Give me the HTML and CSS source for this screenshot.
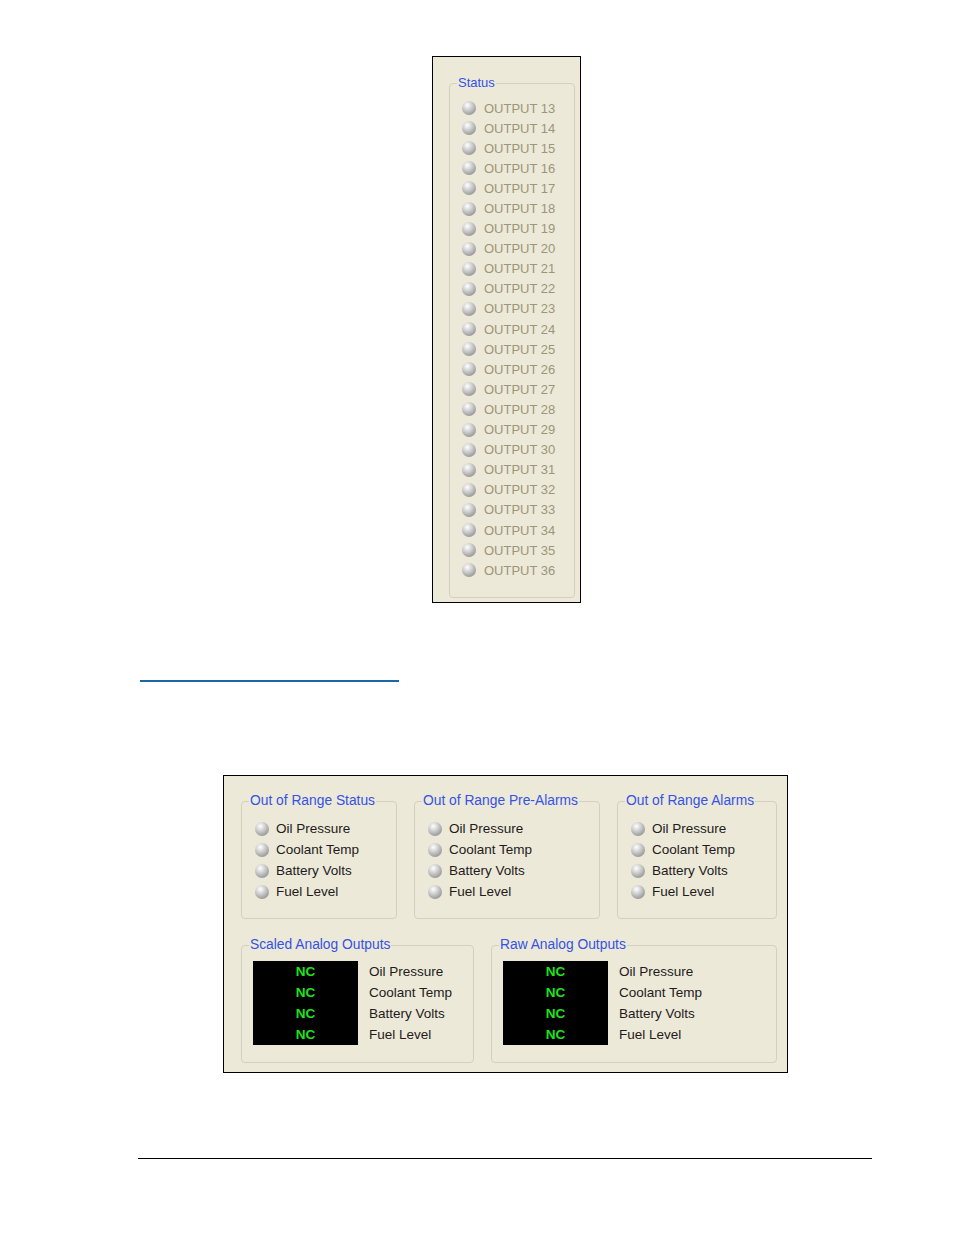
FILE: index.html
```html
<!DOCTYPE html>
<html lang="en">
<head>
  <meta charset="UTF-8" />
  <meta name="viewport" content="width=device-width, initial-scale=1.0"/>
  <title>Status and Analog Outputs</title>
  <link rel="stylesheet" href="styles.css">
</head>
<body>

  <div class="window status-window">
    <fieldset class="group status-group">
      <legend>Status</legend>
      <ul class="leds dim">
        <li><span class="led"></span>OUTPUT 13</li>
        <li><span class="led"></span>OUTPUT 14</li>
        <li><span class="led"></span>OUTPUT 15</li>
        <li><span class="led"></span>OUTPUT 16</li>
        <li><span class="led"></span>OUTPUT 17</li>
        <li><span class="led"></span>OUTPUT 18</li>
        <li><span class="led"></span>OUTPUT 19</li>
        <li><span class="led"></span>OUTPUT 20</li>
        <li><span class="led"></span>OUTPUT 21</li>
        <li><span class="led"></span>OUTPUT 22</li>
        <li><span class="led"></span>OUTPUT 23</li>
        <li><span class="led"></span>OUTPUT 24</li>
        <li><span class="led"></span>OUTPUT 25</li>
        <li><span class="led"></span>OUTPUT 26</li>
        <li><span class="led"></span>OUTPUT 27</li>
        <li><span class="led"></span>OUTPUT 28</li>
        <li><span class="led"></span>OUTPUT 29</li>
        <li><span class="led"></span>OUTPUT 30</li>
        <li><span class="led"></span>OUTPUT 31</li>
        <li><span class="led"></span>OUTPUT 32</li>
        <li><span class="led"></span>OUTPUT 33</li>
        <li><span class="led"></span>OUTPUT 34</li>
        <li><span class="led"></span>OUTPUT 35</li>
        <li><span class="led"></span>OUTPUT 36</li>
      </ul>
    </fieldset>
  </div>

  <hr class="section-rule">

  <div class="window range-window">
    <div class="group-row">
      <fieldset class="group range-status">
        <legend>Out of Range Status</legend>
        <ul class="leds">
          <li><span class="led"></span>Oil Pressure</li>
          <li><span class="led"></span>Coolant Temp</li>
          <li><span class="led"></span>Battery Volts</li>
          <li><span class="led"></span>Fuel Level</li>
        </ul>
      </fieldset>
      <fieldset class="group range-prealarms">
        <legend>Out of Range Pre-Alarms</legend>
        <ul class="leds">
          <li><span class="led"></span>Oil Pressure</li>
          <li><span class="led"></span>Coolant Temp</li>
          <li><span class="led"></span>Battery Volts</li>
          <li><span class="led"></span>Fuel Level</li>
        </ul>
      </fieldset>
      <fieldset class="group range-alarms">
        <legend>Out of Range Alarms</legend>
        <ul class="leds">
          <li><span class="led"></span>Oil Pressure</li>
          <li><span class="led"></span>Coolant Temp</li>
          <li><span class="led"></span>Battery Volts</li>
          <li><span class="led"></span>Fuel Level</li>
        </ul>
      </fieldset>
    </div>

    <div class="group-row">
      <fieldset class="group scaled-outputs">
        <legend>Scaled Analog Outputs</legend>
        <div class="analog">
          <ul class="readout">
            <li>NC</li>
            <li>NC</li>
            <li>NC</li>
            <li>NC</li>
          </ul>
          <ul class="labels">
            <li>Oil Pressure</li>
            <li>Coolant Temp</li>
            <li>Battery Volts</li>
            <li>Fuel Level</li>
          </ul>
        </div>
      </fieldset>
      <fieldset class="group raw-outputs">
        <legend>Raw Analog Outputs</legend>
        <div class="analog">
          <ul class="readout">
            <li>NC</li>
            <li>NC</li>
            <li>NC</li>
            <li>NC</li>
          </ul>
          <ul class="labels">
            <li>Oil Pressure</li>
            <li>Coolant Temp</li>
            <li>Battery Volts</li>
            <li>Fuel Level</li>
          </ul>
        </div>
      </fieldset>
    </div>
  </div>

  <hr class="page-rule">

</body>
</html>
```

FILE: styles.css
```css
body {
  margin: 0;
  padding-top: 56px;
  background-color: #fff;
  font-family: "Liberation Sans", Arial, sans-serif;
  font-size: 13px;
}

ul {
  list-style-type: none;
  margin: 0;
  padding: 0;
}

.window {
  box-sizing: border-box;
  background-color: #ece9d8;
  border: 1px solid #000;
}

/* group boxes */
.group {
  box-sizing: border-box;
  margin: 0;
  border: 1px solid #d3d0c0;
  border-radius: 4px;
}

.group legend {
  padding: 0 1px;
  margin-left: 7px;
  color: #3552e6;
  font-size: 13.8px;
  line-height: 16px;
}

/* round indicator lamps */
.leds li {
  display: flex;
  align-items: center;
}

.led {
  flex: none;
  width: 14px;
  height: 14px;
  border-radius: 50%;
  background: radial-gradient(circle at 38% 30%, #ffffff 0%, #dedede 25%, #a8a8a8 65%, #8f8f8f 85%, #b4b4b4 100%);
}

/* status window */
.status-window {
  width: 149px;
  height: 547px;
  margin-left: 432px;
  padding: 18px 5px 5px 16px;
}

.status-group {
  height: 523px;
  padding: 7px 0 0 0;
}

.status-group legend {
  font-size: 13px;
}

.status-group .leds {
  margin-left: 12px;
}

.dim li {
  height: 20.1px;
  color: #9d9579;
}

.dim .led {
  margin-right: 8px;
}

.section-rule {
  width: 259px;
  margin: 77px 0 0 140px;
  border: 0;
  border-top: 2px solid #1c68a6;
}

/* out of range window */
.range-window {
  width: 565px;
  height: 298px;
  margin: 93px 0 0 223px;
  padding: 17px 9px 0 17px;
  display: flex;
  flex-direction: column;
  gap: 18px;
}

.group-row {
  display: flex;
  gap: 17px;
}

.group-row .group {
  height: 126px;
  padding: 0;
}

.group-row:first-child .group {
  padding-top: 9px;
}

.group-row:first-child .leds {
  margin-left: 13px;
}

.range-status {
  width: 156px;
}

.range-prealarms {
  width: 186px;
}

.range-alarms {
  width: 160px;
}

.range-window .leds li {
  height: 21px;
  font-size: 13.5px;
  color: #231a1c;
}

.range-window .led {
  margin-right: 7px;
}

.scaled-outputs {
  width: 233px;
}

.raw-outputs {
  width: 286px;
}

.group-row:last-child .group {
  padding-top: 8px;
}

.analog {
  display: flex;
  gap: 11px;
  margin-left: 11px;
}

.readout {
  width: 105px;
  height: 84px;
  background-color: #000;
  text-align: center;
}

.readout li {
  height: 21px;
  line-height: 21px;
  font-weight: bold;
  font-size: 13.5px;
  color: #1de31d;
}

.labels li {
  height: 21px;
  line-height: 21px;
  font-size: 13.5px;
  color: #231a1c;
}

.page-rule {
  width: 734px;
  margin: 85px 0 0 138px;
  border: 0;
  border-top: 1.5px solid #000;
}
```
